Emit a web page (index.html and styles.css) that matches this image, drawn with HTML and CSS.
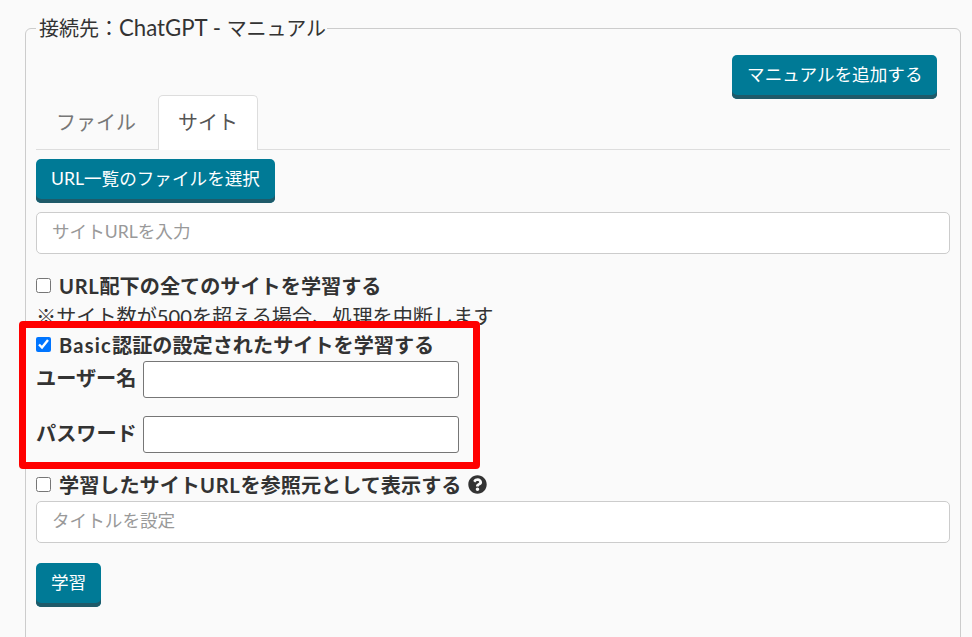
FILE: index.html
```html
<!DOCTYPE html>
<html lang="ja">
<head>
<meta charset="utf-8">
<title>接続先</title>
<link rel="stylesheet" href="styles.css">
</head>
<body>
<fieldset class="panel">
  <legend class="panel-title">接続先：<span class="panel-title-latin">ChatGPT - </span>マニュアル</legend>
  <div class="top-actions"><button class="btn" type="button">マニュアルを追加する</button></div>
  <div class="tabs">
    <div class="tab">ファイル</div>
    <div class="tab tab-active">サイト</div>
  </div>
  <button class="btn btn-file" type="button">URL一覧のファイルを選択</button>
  <input class="text-input url-input" type="text" placeholder="サイトURLを入力">
  <label class="check check-all"><input type="checkbox"><span><span class="wide">URL</span>配下の全てのサイトを学習する</span></label>
  <p class="note">※サイト数が500を超える場合、処理を中断します</p>
  <div class="basic">
    <label class="check"><input type="checkbox" checked><span><span class="wider">Basic</span>認証の設定されたサイトを学習する</span></label>
    <div class="cred cred-user"><span class="cred-label">ユーザー名</span><input class="cred-input" type="text"></div>
    <div class="cred cred-pass"><span class="cred-label">パスワード</span><input class="cred-input" type="text"></div>
    <div class="highlight"></div>
  </div>
  <label class="check check-ref"><input type="checkbox"><span>学習したサイト<span class="wide">URL</span>を参照元として表示する</span>
    <svg class="help" viewBox="0 0 512 512" aria-hidden="true"><path d="M504 256c0 136.997-111.043 248-248 248S8 392.997 8 256C8 119.083 119.043 8 256 8s248 111.083 248 248zM262.655 90c-54.497 0-89.255 22.957-116.549 63.758-3.536 5.286-2.353 12.415 2.715 16.258l34.699 26.31c5.205 3.947 12.621 3.008 16.665-2.122 17.864-22.658 30.113-35.797 57.303-35.797 20.429 0 45.698 13.148 45.698 32.958 0 14.976-12.363 22.667-32.534 33.976C247.128 238.528 216 254.941 216 296v4c0 6.627 5.373 12 12 12h56c6.627 0 12-5.373 12-12v-1.333c0-28.462 83.186-29.647 83.186-106.667 0-58.002-60.165-106-116.531-106zM256 338c-25.365 0-46 20.635-46 46 0 25.364 20.635 46 46 46s46-20.636 46-46c0-25.365-20.635-46-46-46z"/></svg>
  </label>
  <input class="text-input title-input" type="text" placeholder="タイトルを設定">
  <button class="btn btn-learn" type="button">学習</button>
</fieldset>
</body>
</html>
```
FILE: styles.css
```css
html, body {
  margin: 0;
  height: 637px;
  overflow: hidden;
  background: #fafafa;
}
body {
  padding: 0 11px 0 25px;
  box-sizing: border-box;
  font-family: "Lato", "Noto Sans CJK JP", sans-serif;
  color: #333;
  font-size: 20.15px;
}
.wide {
  letter-spacing: 0.7px;
}
.wider {
  letter-spacing: 1.2px;
}
.panel {
  margin: 18px 0 0;
  padding: 0 10px 40px;
  height: 640px;
  box-sizing: border-box;
  border: 1px solid #ccc;
  border-radius: 6px;
  min-width: 0;
}
.panel-title {
  padding: 0 1px 0 3px;
  font-size: 20px;
  line-height: 20px;
  color: #333;
}
.panel-title-latin {
  font-size: 22.2px;
  line-height: 20px;
}
.top-actions {
  display: flex;
  justify-content: flex-end;
  padding: 17px 13px 0 0;
  height: 49px;
}
.btn {
  display: block;
  height: 44px;
  padding: 0 15px 8px;
  border: 0;
  border-radius: 5px;
  background: #007a96;
  box-shadow: inset 0 -4px 0 #1f5a69;
  color: #fff;
  font-family: inherit;
  font-size: 17.6px;
  white-space: nowrap;
}
.top-actions .btn {
  padding-left: 15.5px;
  padding-right: 14.5px;
}
.tabs {
  display: flex;
  gap: 2px;
  height: 54px;
  margin-top: -9px;
  border-bottom: 1px solid #ddd;
}
.tab {
  padding: 0 19px;
  height: 54px;
  line-height: 52px;
  font-size: 20px;
  color: #777;
  border: 1px solid transparent;
  border-bottom: 0;
  border-radius: 5px 5px 0 0;
}
.tab-active {
  background: #fff;
  color: #555;
  border-color: #ddd;
}
.btn-file {
  margin-top: 9px;
}
.text-input {
  display: block;
  width: 100%;
  height: 42px;
  box-sizing: border-box;
  padding: 0 15px 3px;
  background: #fff;
  border: 1px solid #ccc;
  border-radius: 5px;
  font-family: inherit;
  font-size: 17.6px;
  outline: 0;
}
.text-input::placeholder {
  color: #999;
  opacity: 1;
}
.url-input {
  margin-top: 9px;
}
.check {
  display: flex;
  align-items: center;
  height: 30px;
  font-weight: 700;
  white-space: nowrap;
}
.check input {
  width: 15px;
  height: 15px;
  margin: 0 8px 0 0;
  flex: none;
}
.check-all {
  margin-top: 16px;
}
.note {
  margin: 0;
  height: 29px;
  line-height: 32px;
  white-space: nowrap;
}
.basic {
  position: relative;
  height: 140px;
}
.cred {
  display: flex;
  align-items: center;
  height: 37px;
  font-weight: 700;
}
.cred-user { margin-top: 2px; }
.cred-pass { margin-top: 18px; }
.cred-label {
  width: 107px;
  flex: none;
  padding-bottom: 4px;
  white-space: nowrap;
}
.cred-input {
  width: 316px;
  height: 37px;
  box-sizing: border-box;
  background: #fff;
  border: 1px solid #767676;
  border-radius: 3px;
}
.highlight {
  position: absolute;
  left: -17px;
  top: -8px;
  width: 461px;
  height: 148px;
  box-sizing: border-box;
  border: 7px solid #f00;
  border-radius: 4px;
}
.help {
  width: 19px;
  height: 19px;
  margin-left: 7px;
  fill: #333;
}
.title-input {
  margin-top: 2px;
}
.btn-learn {
  margin-top: 20px;
}
```
